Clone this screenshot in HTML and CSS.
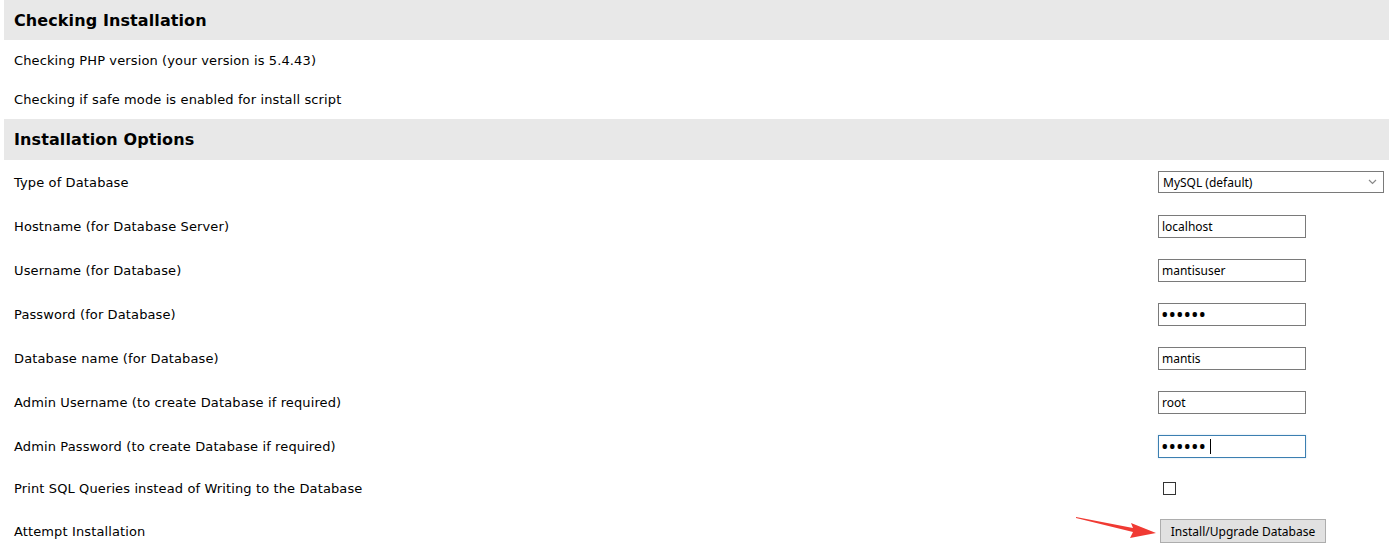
FILE: index.html
```html
<!DOCTYPE html>
<html>
<head>
    <title>MantisBT - Administration - Installation</title>
    <meta charset="utf-8">
    <link rel="stylesheet" href="styles.css">
</head>
<body>
    <div class="panel">
        <div class="section-title">Checking Installation</div>
        <div class="check-row">Checking PHP version (your version is 5.4.43)</div>
        <div class="check-row">Checking if safe mode is enabled for install script</div>

        <div class="section-title section-title-tall">Installation Options</div>
        <form class="options" onsubmit="return false">
            <div class="row">
                <label for="db_type">Type of Database</label>
                <div class="control">
                    <select id="db_type">
                        <option>MySQL (default)</option>
                        <option>MySQL Improved</option>
                        <option>PostgreSQL</option>
                    </select>
                </div>
            </div>
            <div class="row">
                <label for="hostname">Hostname (for Database Server)</label>
                <div class="control"><input type="text" id="hostname" value="localhost"></div>
            </div>
            <div class="row">
                <label for="db_username">Username (for Database)</label>
                <div class="control"><input type="text" id="db_username" value="mantisuser"></div>
            </div>
            <div class="row">
                <label for="db_password">Password (for Database)</label>
                <div class="control"><input type="password" id="db_password" value="123456"></div>
            </div>
            <div class="row">
                <label for="database_name">Database name (for Database)</label>
                <div class="control"><input type="text" id="database_name" value="mantis"></div>
            </div>
            <div class="row">
                <label for="admin_username">Admin Username (to create Database if required)</label>
                <div class="control"><input type="text" id="admin_username" value="root"></div>
            </div>
            <div class="row">
                <label for="admin_password">Admin Password (to create Database if required)</label>
                <div class="control">
                    <input type="password" id="admin_password" class="focused" value="123456">
                    <span class="caret"></span>
                </div>
            </div>
            <div class="row row-check">
                <label for="log_queries">Print SQL Queries instead of Writing to the Database</label>
                <div class="control"><input type="checkbox" id="log_queries"></div>
            </div>
            <div class="row row-submit">
                <label>Attempt Installation</label>
                <div class="control">
                    <button type="submit">Install/Upgrade Database</button>
                    <svg class="arrow" width="84" height="24" viewBox="0 0 84 24">
                        <polygon points="0,1 57,12 55,7 80,17 54,22 57,16 0,2" fill="#f03a33"/>
                    </svg>
                </div>
            </div>
        </form>
    </div>
</body>
</html>
```

FILE: styles.css
```css
:root {
    --title-bg: #e8e8e8;
    --text-color: #000;
    --control-width: 231px;
}

body {
    margin: 0;
    font-family: "DejaVu Sans", Verdana, sans-serif;
    font-size: 13px;
    letter-spacing: 0.12px;
    color: var(--text-color);
    background: #fff;
}

.panel {
    margin-left: 4px;
}

.section-title {
    background-color: var(--title-bg);
    height: 40px;
    padding: 0 10px;
    display: flex;
    align-items: center;
    font-weight: bold;
    font-size: 16px;
    letter-spacing: 0.1px;
}

.section-title-tall {
    height: 41px;
}

.check-row {
    height: 39px;
    padding: 0 10px;
    display: flex;
    align-items: center;
}

.section-title + .check-row {
    height: 40px;
}

.row {
    height: 44px;
    padding-left: 10px;
    display: flex;
    align-items: center;
}

.row-check {
    height: 40px;
}

.row-submit {
    height: 46px;
}

.row label {
    flex: 1;
}

.control {
    width: var(--control-width);
    position: relative;
    display: flex;
    align-items: center;
}

select,
input[type="text"],
input[type="password"],
button {
    font-family: "Noto Sans", "DejaVu Sans", sans-serif;
    font-size: 12px;
    letter-spacing: 0;
    color: #000;
}

select {
    width: 226px;
    height: 22px;
    margin: 0;
    padding: 0 4px;
    border: 1px solid #7a7a7a;
    border-radius: 0;
    background: #fff url("data:image/svg+xml;utf8,<svg xmlns='http://www.w3.org/2000/svg' width='9' height='6'><path d='M1 1l3.5 3.5L8 1' fill='none' stroke='%23888' stroke-width='1.2'/></svg>") no-repeat right 6px center;
    appearance: none;
    -webkit-appearance: none;
}

input[type="text"],
input[type="password"] {
    box-sizing: border-box;
    width: 148px;
    height: 23px;
    margin: 0;
    padding: 0 3px;
    border: 1px solid #7a7a7a;
    border-radius: 0;
    outline: none;
}

input[type="password"] {
    font-size: 20px;
    letter-spacing: 0;
    padding-left: 2px;
}

input.focused {
    border-color: #3c7fb1;
    box-shadow: 0 0 2px rgba(60, 127, 177, 0.25);
}

.caret {
    position: absolute;
    left: 52px;
    top: 4px;
    width: 1px;
    height: 15px;
    background: #000;
}

input[type="checkbox"] {
    width: 13px;
    height: 13px;
    margin: 0 0 0 5px;
    appearance: none;
    -webkit-appearance: none;
    border: 1px solid #333;
    background: #fff;
    border-radius: 0;
}

button {
    margin-left: 2px;
    width: 166px;
    height: 24px;
    padding: 0;
    border: 1px solid #adadad;
    border-radius: 0;
    background-color: #e1e1e1;
}

.arrow {
    position: absolute;
    left: -82px;
    top: -3px;
}
```
